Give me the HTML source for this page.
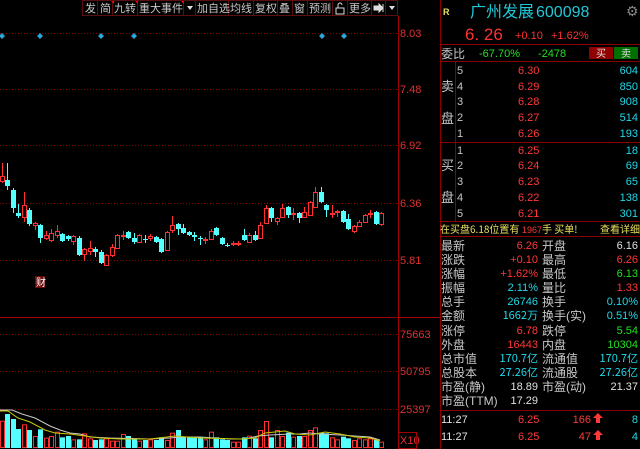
<!DOCTYPE html>
<html><head><meta charset="utf-8"><style>
html,body{margin:0;padding:0;background:#000;width:640px;height:449px;overflow:hidden}
svg{display:block}
text{font-family:"Liberation Sans","Noto Sans CJK SC",sans-serif}
.cn{font-family:"Noto Sans CJK SC","WenQuanYi Zen Hei",sans-serif}
</style></head><body>
<svg id="s" width="640" height="449" viewBox="0 0 640 449" xmlns="http://www.w3.org/2000/svg">
<rect width="640" height="449" fill="#000"/>
<!-- toolbar -->
<g stroke="#5a1010" fill="#000" stroke-width="1">
<rect x="82.5" y="0.5" width="15" height="15"/><rect x="97.5" y="0.5" width="15" height="15"/>
<rect x="112.5" y="0.5" width="25" height="15"/><rect x="137.5" y="0.5" width="46" height="15"/>
<rect x="183.5" y="0.5" width="12" height="15"/><rect x="195.5" y="0.5" width="33" height="15"/>
<rect x="228.5" y="0.5" width="25" height="15"/><rect x="253.5" y="0.5" width="24" height="15"/>
<rect x="277.5" y="0.5" width="15" height="15"/><rect x="292.5" y="0.5" width="15" height="15"/>
<rect x="307.5" y="0.5" width="25" height="15"/><rect x="332.5" y="0.5" width="15" height="15"/>
<rect x="347.5" y="0.5" width="24" height="15"/><rect x="371.5" y="0.5" width="14" height="15"/>
<rect x="385.5" y="0.5" width="12" height="15"/>
</g>
<g fill="#c8c8c8" font-size="11" class="cn">
<text x="85" y="12" class="cn">发</text><text x="100" y="12" class="cn">简</text>
<text x="114" y="12" class="cn">九转</text><text x="139" y="12" class="cn">重大事件</text>
<text x="197" y="12" class="cn">加自选</text><text x="230" y="12" class="cn">均线</text>
<text x="255" y="12" class="cn">复权</text><text x="279" y="12" class="cn">叠</text>
<text x="294" y="12" class="cn">窗</text><text x="309" y="12" class="cn">预测</text>
<text x="349" y="12" class="cn">更多</text>
</g>
<path d="M187 6h6l-3 4z M389 6h6l-3 4z" fill="#ddd"/>
<path d="M111 1h3v3z M135 1h3v3z M181 1h3v3z" fill="#f00"/>
<rect x="336" y="8" width="8" height="6" fill="none" stroke="#ddd"/><path d="M338 8V5a2 2 0 0 1 4 0" fill="none" stroke="#ddd"/>
<path d="M374 6h5v-2l4 4-4 4v-2h-5z M383 4v8" fill="#ddd" stroke="#ddd" stroke-width="1"/>
<!-- grid -->
<g stroke="#8a0000" stroke-dasharray="1 2" stroke-width="1">
<line x1="0" y1="33.5" x2="398" y2="33.5"/><line x1="0" y1="89.5" x2="398" y2="89.5"/>
<line x1="0" y1="145.5" x2="398" y2="145.5"/><line x1="0" y1="203.5" x2="398" y2="203.5"/>
<line x1="0" y1="260.5" x2="398" y2="260.5"/><line x1="0" y1="334.5" x2="398" y2="334.5"/>
<line x1="0" y1="371.5" x2="398" y2="371.5"/><line x1="0" y1="409.5" x2="398" y2="409.5"/>
</g>
<line x1="398.5" y1="16" x2="398.5" y2="449" stroke="#a00000"/>
<line x1="0" y1="317.5" x2="440" y2="317.5" stroke="#a00000"/>
<g fill="#e03030" font-size="11">
<text x="400" y="37">8.03</text><text x="400" y="93">7.48</text><text x="400" y="149">6.92</text>
<text x="400" y="207">6.36</text><text x="400" y="264">5.81</text><text x="400" y="338">75663</text>
<text x="400" y="375">50795</text><text x="400" y="413">25397</text><text x="400" y="444">X10</text>
</g>
<rect x="398.5" y="432.5" width="18" height="16" fill="none" stroke="#a00000"/>
<g fill="#2aa8d8">
<path d="M2 33l3 3-3 3-3-3z M40 33l3 3-3 3-3-3z M101 33l3 3-3 3-3-3z M134 33l3 3-3 3-3-3z M322 33l3 3-3 3-3-3z M344 33l3 3-3 3-3-3z"/>
</g>
<rect x="35" y="276" width="10" height="12" fill="#6a0a0a"/>
<text x="36" y="286" font-size="10" fill="#fff" class="cn">财</text>
<g id="cand"></g>
<g id="vol"></g>
<polyline fill="none" stroke="#c8c8c8" stroke-width="1" points="0,410 12,410 22,414 35,418 50,426 60,430 70,433 80,434 90,437 110,438 150,439 170,438 180,437 200,437 230,439 245,439 258,436 270,435 290,434 300,434 310,433 320,434 340,435 355,436 370,437 380,440"/>
<polyline fill="none" stroke="#c8c800" stroke-width="1" points="0,411 8,411 18,418 30,422 45,430 55,433 70,434 85,436 100,438 120,439 150,439 175,436 200,438 240,439 255,438 265,433 275,432 285,431 295,434 310,435 325,432 340,434 355,437 370,438 380,441"/>
<!-- right panel -->
<g stroke="#8a0000" stroke-width="1" fill="none">
<line x1="440.5" y1="0" x2="440.5" y2="449"/>
<line x1="440" y1="44.5" x2="640" y2="44.5"/>
<line x1="440" y1="61.5" x2="640" y2="61.5"/>
<line x1="440" y1="142.5" x2="640" y2="142.5"/>
<line x1="440" y1="221.5" x2="640" y2="221.5"/>
<line x1="440" y1="236.5" x2="640" y2="236.5"/>
<line x1="440" y1="410.5" x2="640" y2="410.5"/>
<line x1="455.5" y1="61" x2="455.5" y2="221"/>
</g>
<text x="443" y="15" font-size="9" fill="#e8e060" font-weight="bold">R</text>
<text x="470" y="17" font-size="16" fill="#20c8d8" class="cn">广州发展</text>
<text x="536" y="17" font-size="16" fill="#20c8d8">600098</text>
<text x="626" y="16" font-size="14" fill="#888">⚙</text>
<text x="465" y="40" font-size="17" fill="#ff3030">6. 26</text>
<text x="515" y="39" font-size="11" fill="#ff3030">+0.10</text>
<text x="551" y="39" font-size="11" fill="#ff3030">+1.62%</text>
<text x="441" y="58" font-size="12" fill="#c8c8c8" class="cn">委比</text>
<text x="479" y="57" font-size="11" fill="#20e020">-67.70%</text>
<text x="538" y="57" font-size="11" fill="#20e020">-2478</text>
<rect x="589" y="47" width="24" height="12" fill="#900000"/><text x="596" y="57" font-size="10" fill="#ddd" class="cn">买</text>
<rect x="614" y="47" width="24" height="12" fill="#007000"/><text x="621" y="57" font-size="10" fill="#ddd" class="cn">卖</text>
<g font-size="13" fill="#c8c8c8" class="cn">
<text x="441" y="91">卖</text><text x="441" y="123">盘</text>
<text x="441" y="170">买</text><text x="441" y="202">盘</text>
</g>
<g font-size="11" fill="#c8c8c8">
<text x="457" y="74">5</text><text x="457" y="90">4</text><text x="457" y="105">3</text><text x="457" y="121">2</text><text x="457" y="137">1</text>
<text x="457" y="154">1</text><text x="457" y="169">2</text><text x="457" y="185">3</text><text x="457" y="201">4</text><text x="457" y="217">5</text>
</g>
<g font-size="11" fill="#ff3838">
<text x="518" y="74">6.30</text><text x="518" y="90">6.29</text><text x="518" y="105">6.28</text><text x="518" y="121">6.27</text><text x="518" y="137">6.26</text>
<text x="518" y="154">6.25</text><text x="518" y="169">6.24</text><text x="518" y="185">6.23</text><text x="518" y="201">6.22</text><text x="518" y="217">6.21</text>
</g>
<g font-size="11" fill="#20d8e8" text-anchor="end">
<text x="638" y="74">604</text><text x="638" y="90">850</text><text x="638" y="105">908</text><text x="638" y="121">514</text><text x="638" y="137">193</text>
<text x="638" y="154">18</text><text x="638" y="169">69</text><text x="638" y="185">65</text><text x="638" y="201">138</text><text x="638" y="217">301</text>
</g>
<text x="440" y="233" font-size="10" fill="#e8e060" class="cn">在买盘6.18位置有</text>
<text x="522" y="233" font-size="9" fill="#ff3838">1967</text>
<text x="542" y="233" font-size="10" fill="#e8e060" class="cn">手 买单!</text>
<text x="600" y="233" font-size="10" fill="#e8e060" class="cn">查看详细</text>
<g font-size="12" fill="#c8c8c8" class="cn">
<text x="441" y="250">最新</text><text x="441" y="264">涨跌</text><text x="441" y="278">涨幅</text><text x="441" y="292">振幅</text>
<text x="441" y="306">总手</text><text x="441" y="320">金额</text><text x="441" y="335">涨停</text><text x="441" y="349">外盘</text>
<text x="441" y="363">总市值</text><text x="441" y="377">总股本</text><text x="441" y="391">市盈(静)</text><text x="441" y="405">市盈(TTM)</text>
<text x="542" y="250">开盘</text><text x="542" y="264">最高</text><text x="542" y="278">最低</text><text x="542" y="292">量比</text>
<text x="542" y="306">换手</text><text x="542" y="320">换手(实)</text><text x="542" y="335">跌停</text><text x="542" y="349">内盘</text>
<text x="542" y="363">流通值</text><text x="542" y="377">流通股</text><text x="542" y="391">市盈(动)</text>
</g>
<g font-size="11" text-anchor="end">
<text x="538" y="249" fill="#ff3838">6.26</text><text x="538" y="263" fill="#ff3838">+0.10</text><text x="538" y="277" fill="#ff3838">+1.62%</text>
<text x="538" y="291" fill="#20d8e8">2.11%</text><text x="538" y="305" fill="#20d8e8">26746</text><text x="538" y="319" fill="#20d8e8" class="cn">1662万</text>
<text x="538" y="334" fill="#ff3838">6.78</text><text x="538" y="348" fill="#ff3838">16443</text><text x="538" y="362" fill="#20d8e8" class="cn">170.7亿</text>
<text x="538" y="376" fill="#20d8e8" class="cn">27.26亿</text><text x="538" y="390" fill="#e0e0e0">18.89</text><text x="538" y="404" fill="#e0e0e0">17.29</text>
<text x="638" y="249" fill="#e0e0e0">6.16</text><text x="638" y="263" fill="#ff3838">6.26</text><text x="638" y="277" fill="#20e020">6.13</text>
<text x="638" y="291" fill="#ff3838">1.33</text><text x="638" y="305" fill="#20d8e8">0.10%</text><text x="638" y="319" fill="#20d8e8">0.51%</text>
<text x="638" y="334" fill="#20e020">5.54</text><text x="638" y="348" fill="#20e020">10304</text><text x="638" y="362" fill="#20d8e8" class="cn">170.7亿</text>
<text x="638" y="376" fill="#20d8e8" class="cn">27.26亿</text><text x="638" y="390" fill="#e0e0e0">21.37</text>
</g>
<g font-size="11">
<text x="441" y="423" fill="#e0e0e0">11:27</text><text x="518" y="423" fill="#ff3838">6.25</text><text x="591" y="423" fill="#ff3838" text-anchor="end">166</text><text x="638" y="423" fill="#20d8e8" text-anchor="end">8</text>
<text x="441" y="440" fill="#e0e0e0">11:27</text><text x="518" y="440" fill="#ff3838">6.25</text><text x="591" y="440" fill="#ff3838" text-anchor="end">47</text><text x="638" y="440" fill="#20d8e8" text-anchor="end">4</text>
</g>
<path d="M598 413l5 5h-3v5h-4v-5h-3z M598 430l5 5h-3v5h-4v-5h-3z" fill="#ff3838"/>
</svg>
<script>
var C=[
['r',176,181,163,183],['c',180,186,163,190],['c',190,208,188,213],['c',213,216,204,218],['r',205,217,192,222],
['c',210,224,208,226],['r',223,225,222,230],['c',225,238,224,243],['r',235,238,231,240],['r',233,240,229,242],
['r',231,235,225,238],['c',234,241,233,242],['c',236,239,235,241],['r',236,241,235,245],['c',238,255,236,256],
['r',249,254,248,261],['r',248,251,241,255],['c',249,252,247,257],['c',252,263,250,264],['r',255,265,254,266],
['r',247,255,244,257],['r',235,248,234,249],['r',235,236,231,240],['c',232,238,231,239],['c',238,242,233,244],
['r',235,242,234,243],['c',239,240,235,243],['r',236,238,234,241],['c',237,242,236,243],['c',239,252,238,253],
['r',232,250,231,251],['r',225,230,216,233],['c',224,229,223,235],['c',228,233,224,234],['c',232,235,231,236],
['c',235,237,232,241],['c',238,239,236,245],['r',239,240,237,244],['r',231,239,229,240],['c',228,235,227,236],
['c',238,244,237,245],['c',245,246,243,247],['r',243,244,241,246],['r',243,244,241,246],['c',235,240,229,241],
['r',235,242,233,243],['c',235,240,231,241],['r',225,238,222,239],['r',208,223,205,224],['c',208,218,207,222],
['r',218,221,217,225],['r',208,217,204,218],['c',207,215,206,218],['r',213,214,208,220],['c',213,218,212,223],
['r',212,217,207,218],['r',202,215,201,216],['r',192,207,187,208],['c',192,202,187,203],['c',205,210,204,217],
['r',213,214,205,218],['r',211,212,210,217],['c',211,222,210,223],['c',219,229,214,230],['r',226,231,225,233],
['r',222,226,220,227],['r',215,222,214,223],['r',213,214,210,218],['c',212,224,211,225],['r',213,224,212,226]];
var V=[212,192,207,237,223,240,258,238,263,258,245,262,258,268,268,250,265,270,268,265,272,272,252,258,268,272,270,268,270,262,270,248,240,260,262,262,262,268,245,262,268,270,275,275,262,257,265,240,213,262,240,258,248,260,258,258,240,232,248,250,262,268,260,265,270,265,268,265,270,275];
var ns="http://www.w3.org/2000/svg",g=document.getElementById('cand'),gv=document.getElementById('vol');
function el(p,a){var e=document.createElementNS(ns,'rect');for(var k in a)e.setAttribute(k,a[k]);p.appendChild(e);}
C.forEach(function(c,i){var x=1.7+i*5.5,col=c[0]=='r'?'#ff3030':'#54ffff';
el(g,{x:Math.round(x),y:c[3],width:1,height:c[4]-c[3],fill:col});
var h=Math.max(1,c[2]-c[1]);
if(c[0]=='r')el(g,{x:Math.round(x)-1.5,y:c[1]+0.5,width:4,height:h,fill:'#000',stroke:col,'stroke-width':1});
else el(g,{x:Math.round(x)-2,y:c[1],width:5,height:h,fill:col});
var t=350+V[i]/3;
if(c[0]=='r')el(gv,{x:Math.round(x)-1.5,y:t+0.5,width:4,height:447-t,fill:'#000',stroke:col,'stroke-width':1});
else el(gv,{x:Math.round(x)-2,y:t,width:5,height:448-t,fill:col});
});
</script>
</body></html>
